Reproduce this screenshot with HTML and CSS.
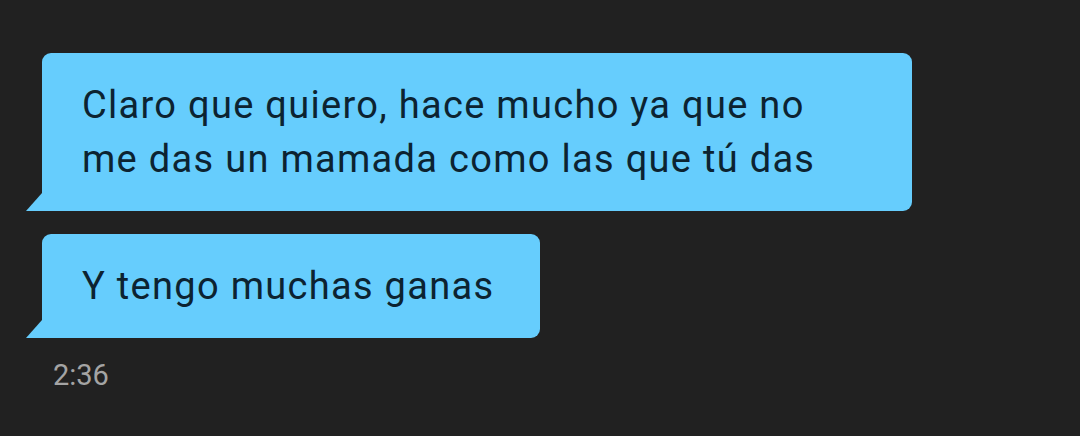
FILE: index.html
```html
<!doctype html>
<html>
<head>
  <title>Chat</title>
  <meta charset="utf-8">
  <link rel="stylesheet" href="styles.css">
</head>
<body>
  <div class="thread">
    <div class="bubble">Claro que quiero, hace mucho ya que no me das un mamada como las que tú das</div>
    <div class="bubble">Y tengo muchas ganas</div>
    <div class="time">2:36</div>
  </div>
</body>
</html>
```

FILE: styles.css
```css
body{
  margin:0;
  background:#212121;
  font-family:Roboto, "Noto Sans", sans-serif;
}
.thread{
  display:flex;
  flex-direction:column;
  align-items:flex-start;
  gap:23px;
  padding:53px 0 0 42px;
}
.bubble{
  position:relative;
  box-sizing:border-box;
  max-width:870px;
  padding:25px 60px 25px 40px;
  background:#66cdfd;
  color:#0c2331;
  font-size:38px;
  line-height:54px;
  letter-spacing:1.3px;
  border-radius:9px 9px 9px 0;
}
.bubble:nth-child(2){
  padding-right:46px;
}
/* little tail on the bottom left */
.bubble::before{
  content:"";
  position:absolute;
  left:-16px;
  bottom:0;
  width:16px;
  height:18px;
  background:#66cdfd;
  clip-path:polygon(100% 0, 100% 100%, 0 100%);
}
.time{
  margin:-3px 0 0 11px;
  color:#a4a4a4;
  font-size:29px;
}
```
